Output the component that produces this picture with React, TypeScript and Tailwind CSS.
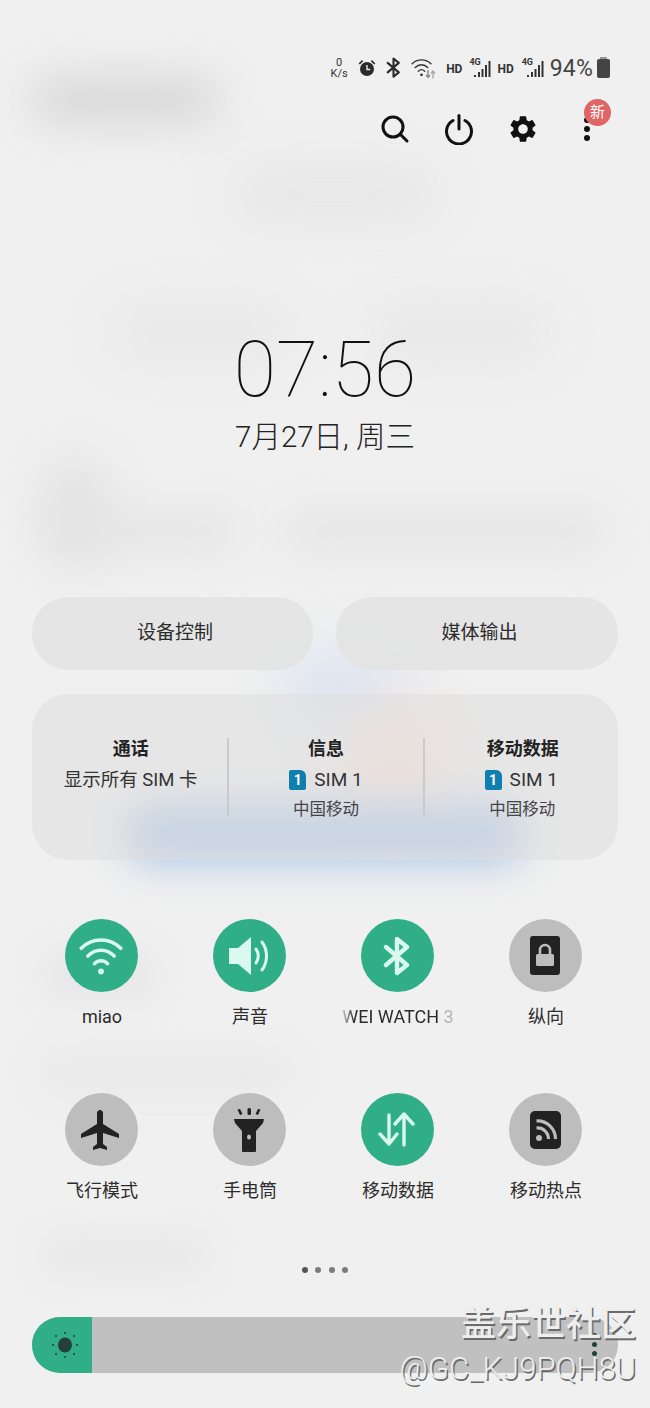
import React from "react";
import { MdSettings, MdFlight } from "react-icons/md";

const Blob = ({ c }: { c: string }) => <div className={c} />;

function Alarm() {
  return (
    <svg width="18" height="18" viewBox="0 0 18 18" fill="#2b2b2b">
      <circle cx="9" cy="10" r="7" />
      <path d="M0.6 4.4 4 1l1.2 1.2-3.4 3.4zM17.4 4.4 14 1l-1.2 1.2 3.4 3.4z" />
      <path d="M9 6v4.5h3.2" stroke="#eee" strokeWidth="1.4" fill="none" />
    </svg>
  );
}
function Bt({ size = 16, color = "#2b2b2b", w = 1.8 }: { size?: number; color?: string; w?: number }) {
  return (
    <svg width={size} height={size * 1.25} viewBox="0 0 16 20" fill="none" stroke={color} strokeWidth={w} strokeLinejoin="round" strokeLinecap="round">
      <path d="M2.5 5.5 13 14.5 8 18.5V1.5L13 5.5 2.5 14.5" />
    </svg>
  );
}
function Wifi({ size, color, sw }: { size: number; color: string; sw: number }) {
  return (
    <svg width={size} height={size} viewBox="0 0 40 36" fill="none" stroke={color} strokeWidth={sw} strokeLinecap="round">
      <path d="M2 11C12 1 28 1 38 11" />
      <path d="M8 18C15 11 25 11 32 18" />
      <path d="M14 25C17.500 21.500 22.500 21.500 26 25" />
      <circle cx="20" cy="32" r="2.6" fill={color} stroke="none" />
    </svg>
  );
}
function Signal() {
  return (
    <div className="relative w-[22px] h-[22px]">
      <span className="absolute left-0 top-0 text-[9px] leading-[10px] font-bold text-[#333]">4G</span>
      <svg className="absolute left-0 top-0" width="22" height="22" viewBox="0 0 22 22" fill="#333">
        <rect x="5" y="18" width="2" height="2" />
        <rect x="9" y="15" width="2" height="5" />
        <rect x="12.500" y="12" width="2" height="8" />
        <rect x="16" y="8" width="2" height="12" />
        <rect x="19.500" y="4" width="2" height="16" />
      </svg>
    </div>
  );
}
const Hd = () => <span className="text-[12px] leading-none font-bold text-[#333] w-[16px] text-center">HD</span>;

function SimLabel() {
  return (
    <div className="flex items-center justify-center gap-[8px] h-[24px] text-[19px] text-[#333]">
      <div className="w-[17px] h-[20px] bg-[#0f7fb0] rounded-[2px] rounded-tr-[6px] flex items-center justify-center text-white text-[14px] leading-none font-bold">1</div>
      <span>SIM 1</span>
    </div>
  );
}

function Tile({ on, icon, label, labelClass }: { on: boolean; icon: React.ReactNode; label: React.ReactNode; labelClass?: string }) {
  return (
    <div className="flex flex-col items-center w-[148px]">
      <div className={"w-[73px] h-[73px] rounded-full flex items-center justify-center " + (on ? "bg-[#2fae87]" : "bg-[#bdbdbd]")}>{icon}</div>
      <div className={"mt-[12px] ml-[2px] h-[26px] leading-[26px] text-[18px] text-[#2c2c2c] " + (labelClass ?? "")}>{label}</div>
    </div>
  );
}

export default function App() {
  return (
    <div className="relative w-[650px] h-[1408px] overflow-hidden bg-[#f0f0f0] font-['Roboto','Noto_Sans_CJK_SC',sans-serif]">
      <div className="absolute inset-0">
        <Blob c="absolute left-[30px] top-[78px] w-[190px] h-[44px] rounded-full bg-[#d6d6d6] blur-[22px]" />
        <Blob c="absolute left-[235px] top-[172px] w-[200px] h-[44px] rounded-full bg-[#e4e4e4] blur-[26px]" />
        <Blob c="absolute left-[110px] top-[310px] w-[180px] h-[44px] rounded-full bg-[#e6e6e6] blur-[26px]" />
        <Blob c="absolute left-[370px] top-[310px] w-[180px] h-[44px] rounded-full bg-[#e6e6e6] blur-[26px]" />
        <Blob c="absolute left-[40px] top-[455px] w-[70px] h-[110px] rounded-full bg-[#e4e4e4] blur-[20px]" />
        <Blob c="absolute left-[50px] top-[512px] w-[190px] h-[38px] rounded-full bg-[#e4e4e4] blur-[20px]" />
        <Blob c="absolute left-[285px] top-[512px] w-[320px] h-[38px] rounded-full bg-[#e4e4e4] blur-[20px]" />
        <Blob c="absolute left-[280px] top-[650px] w-[130px] h-[80px] rounded-full bg-[#dde5f2] blur-[26px]" />
        <Blob c="absolute left-[340px] top-[705px] w-[110px] h-[110px] rounded-full bg-[#f8e2d8] blur-[28px]" />
        <Blob c="absolute left-[125px] top-[806px] w-[400px] h-[56px] rounded-full bg-[#aac4e8] blur-[20px]" />
        <Blob c="absolute left-[45px] top-[955px] w-[110px] h-[40px] rounded-full bg-[#e4e4e4] blur-[18px]" />
        <Blob c="absolute left-[40px] top-[1055px] w-[250px] h-[36px] rounded-full bg-[#e8e8e8] blur-[18px]" />
        <Blob c="absolute left-[40px] top-[1235px] w-[170px] h-[40px] rounded-full bg-[#e8e8e8] blur-[16px]" />
      </div>

      <div className="relative flex flex-col">
        {/* status bar */}
        <div className="h-[24px] mt-[56px] flex items-center justify-end pr-[40px] text-[#333]">
          <div className="flex flex-col items-center w-[20px] text-[11px] leading-[11px] mr-[9px]"><span>0</span><span>K/s</span></div>
          <div className="mr-[9px]"><Alarm /></div>
          <div className="mr-[9px]"><Bt size={17} w={2} /></div>
          <div className="relative w-[25px] h-[22px] mr-[10px]">
            <Wifi size={21} color="#333" sw={2.6} />
            <svg className="absolute right-0 bottom-0" width="11" height="9" viewBox="0 0 11 9" fill="none" strokeWidth="1.4">
              <path d="M3 0v7M1 5l2 2.500 2-2.500" stroke="#888" />
              <path d="M8 8.500V1.500M6 3.500l2-2.500 2 2.500" stroke="#aaa" />
            </svg>
          </div>
          <div className="mr-[7px]"><Hd /></div>
          <div className="mr-[6px]"><Signal /></div>
          <div className="mr-[8px]"><Hd /></div>
          <div className="mr-[6px]"><Signal /></div>
          <span className="text-[23px] leading-none text-[#444] mr-[4px] tracking-[0.2px]">94%</span>
          <div className="relative w-[13px] h-[19px] mt-[1px] bg-[#444] rounded-[2px] before:absolute before:content-[''] before:left-[3px] before:-top-[2px] before:w-[7px] before:h-[2px] before:bg-[#999]" />
        </div>

        {/* action icons */}
        <div className="h-[32px] mt-[33px] flex justify-end pr-[47px] gap-[32px]">
          <svg width="32" height="32" viewBox="0 0 32 32" fill="none" stroke="#111" strokeWidth="3" strokeLinecap="round">
            <circle cx="14" cy="14" r="10" />
            <path d="M21.500 21.500 28 28" />
          </svg>
          <svg width="32" height="32" viewBox="0 0 32 32" fill="none" stroke="#111" strokeWidth="3" strokeLinecap="round">
            <path d="M10 7.500a12.500 12.500 0 1 0 12 0" />
            <path d="M16 2.500V16" />
          </svg>
          <div className="w-[32px] h-[32px] flex items-center justify-center"><MdSettings size={34} color="#111" /></div>
          <div className="relative w-[32px] h-[32px] flex flex-col items-center justify-center gap-[3px]">
            <span className="w-[6px] h-[6px] rounded-full bg-[#111]" />
            <span className="w-[6px] h-[6px] rounded-full bg-[#111]" />
            <span className="w-[6px] h-[6px] rounded-full bg-[#111]" />
            <div className="absolute left-[13px] -top-[14px] w-[27px] h-[27px] rounded-full bg-[#e06565] text-white text-[15px] leading-[27px] text-center">新</div>
          </div>
        </div>

        {/* clock */}
        <div className="mt-[185px] h-[80px] text-center text-[77px] leading-[80px] font-thin text-[#111]">07:56</div>
        <div className="mt-[7px] h-[40px] text-center text-[29.500px] leading-[40px] font-light text-[#222]">7月27日, 周三</div>

        {/* pills */}
        <div className="mt-[140px] mx-[32px] flex gap-[23px]">
          <div className="w-[281px] h-[73px] rounded-[36px] bg-[#e3e3e3]/90 flex items-center justify-center pl-[5px] text-[19px] text-[#2c2c2c]">设备控制</div>
          <div className="flex-1 h-[73px] rounded-[36px] bg-[#e3e3e3]/90 flex items-center justify-center pl-[5px] text-[19px] text-[#2c2c2c]">媒体输出</div>
        </div>

        {/* sim card */}
        <div className="mt-[24px] mx-[32px] h-[166px] rounded-[36px] bg-[#dedede]/55 grid grid-cols-3 items-start pt-[44px] text-[#2c2c2c]">
          <div className="text-center pl-[2px]">
            <div className="h-[28px] -mt-[3px] leading-[28px] text-[18px] font-bold text-[#222]">通话</div>
            <div className="h-[24px] mt-[5px] leading-[24px] text-[18.500px] text-[#333]">显示所有 SIM 卡</div>
          </div>
          <div className="text-center h-[78px] border-l-2 border-[#cacaca]">
            <div className="h-[28px] -mt-[3px] leading-[28px] text-[18px] font-bold text-[#222]">信息</div>
            <div className="mt-[5px]"><SimLabel /></div>
            <div className="h-[24px] mt-[6px] leading-[24px] text-[16.500px] text-[#444]">中国移动</div>
          </div>
          <div className="text-center h-[78px] border-l-2 border-[#cacaca]">
            <div className="h-[28px] -mt-[3px] pl-[3px] leading-[28px] text-[18px] font-bold text-[#222]">移动数据</div>
            <div className="mt-[5px]"><SimLabel /></div>
            <div className="h-[24px] mt-[6px] pl-[2px] leading-[24px] text-[16.500px] text-[#444]">中国移动</div>
          </div>
        </div>

        {/* tiles */}
        <div className="mt-[59px] ml-[27px] flex">
          <Tile on label="miao" icon={<Wifi size={44} color="#d9f8ee" sw={3.2} />} />
          <Tile on label="声音" icon={
            <svg width="48" height="48" viewBox="0 0 48 48" fill="#d9f8ee">
              <path d="M4 16h9L26 5v38L13 32H4z" />
              <path d="M31 17c3 4 3 10 0 14M37 10c6 8 6 20 0 28" fill="none" stroke="#d9f8ee" strokeWidth="3" strokeLinecap="round" />
            </svg>
          } />
          <Tile on labelClass="whitespace-nowrap [mask-image:linear-gradient(to_right,rgba(0,0,0,0.2)_0px,black_12px,black_96px,rgba(0,0,0,0.3)_103px,rgba(0,0,0,0.3)_113px)]" label="WEI WATCH 3" icon={<Bt size={32} color="#d9f8ee" w={2.2} />} />
          <Tile on={false} label="纵向" icon={
            <svg width="30" height="40" viewBox="0 0 30 40">
              <rect x="0" y="0" width="30" height="39" rx="3" fill="#222" />
              <rect x="6" y="18" width="18" height="12" rx="1.500" fill="#bdbdbd" />
              <path d="M10 18v-4a5 5 0 0 1 10 0v4" fill="none" stroke="#bdbdbd" strokeWidth="2.600" />
            </svg>
          } />
        </div>
        <div className="mt-[63px] ml-[27px] flex">
          <Tile on={false} label="飞行模式" icon={<MdFlight size={48} color="#222" />} />
          <Tile on={false} label="手电筒" icon={
            <svg width="30" height="44" viewBox="0 0 30 44" fill="#222">
              <path d="M0 11h30l-1 4-7 8v20a1 1 0 0 1-1 1H9a1 1 0 0 1-1-1V23L1 15z" />
              <ellipse cx="15" cy="29" rx="2" ry="2.500" fill="#bdbdbd" />
              <rect x="13.500" y="0" width="3.500" height="7" rx="1.500" />
              <path d="M3.500 1.500 6 1l2.500 5-2.500 1zM26.500 1.500 24 1l-2.500 5 2.500 1z" />
            </svg>
          } />
          <Tile on label="移动数据" icon={
            <svg width="38" height="36" viewBox="0 0 38 36" fill="none" stroke="#d9f8ee" strokeWidth="3.400" strokeLinecap="round" strokeLinejoin="round">
              <path d="M11 3v29M2 22l9 10 8-10" />
              <path d="M26 33V2M17 12l9-10 9 10" />
            </svg>
          } />
          <Tile on={false} label="移动热点" icon={
            <svg width="31" height="38" viewBox="0 0 31 38">
              <rect x="0" y="0" width="31" height="38" rx="5" fill="#222" />
              <circle cx="9" cy="27" r="3" fill="#bdbdbd" />
              <path d="M6.500 17a11 11 0 0 1 12 11M6.500 10a18 18 0 0 1 19 18" fill="none" stroke="#bdbdbd" strokeWidth="3.200" />
            </svg>
          } />
        </div>

        {/* page dots */}
        <div className="mt-[63px] h-[6px] flex justify-center gap-[7.500px]">
          <span className="w-[6px] h-[6px] rounded-full bg-[#555]" />
          <span className="w-[6px] h-[6px] rounded-full bg-[#7b7b7b]" />
          <span className="w-[6px] h-[6px] rounded-full bg-[#7b7b7b]" />
          <span className="w-[6px] h-[6px] rounded-full bg-[#7b7b7b]" />
        </div>

        {/* brightness */}
        <div className="mt-[44px] mx-[32px] h-[56px] rounded-[28px] overflow-hidden bg-[#c0c0c0] flex relative">
          <div className="w-[60px] h-full bg-[#2fae87] flex items-center justify-center pl-[6px]">
            <svg width="28" height="28" viewBox="0 0 28 28" fill="#263f3b">
              <ellipse cx="14" cy="14" rx="7" ry="7.500" />
              <circle cx="14" cy="2" r="1" /><circle cx="14" cy="26" r="1" />
              <circle cx="2" cy="14" r="1" /><circle cx="26" cy="14" r="1" />
              <circle cx="5" cy="5" r="1" /><circle cx="23" cy="5" r="1" />
              <circle cx="5" cy="23" r="1" /><circle cx="23" cy="23" r="1" />
            </svg>
          </div>
          <div className="absolute left-[560px] top-[16px] flex flex-col gap-[4px]">
            <span className="w-[5px] h-[5px] rounded-full bg-[#263f3b]" />
            <span className="w-[5px] h-[5px] rounded-full bg-[#263f3b]" />
            <span className="w-[5px] h-[5px] rounded-full bg-[#263f3b]" />
          </div>
        </div>
      </div>

      {/* watermark */}
      <div className="absolute right-[14px] top-[1304px] flex flex-col items-end text-[#eeeeee] [text-shadow:1.5px_2px_0_#6a6a6a]">
        <div className="text-[35px] leading-[42px] font-medium">盖乐世社区</div>
        <div className="mt-[3px] text-[31px] leading-[40px] font-light">@GC_KJ9PQH8U</div>
      </div>
    </div>
  );
}
